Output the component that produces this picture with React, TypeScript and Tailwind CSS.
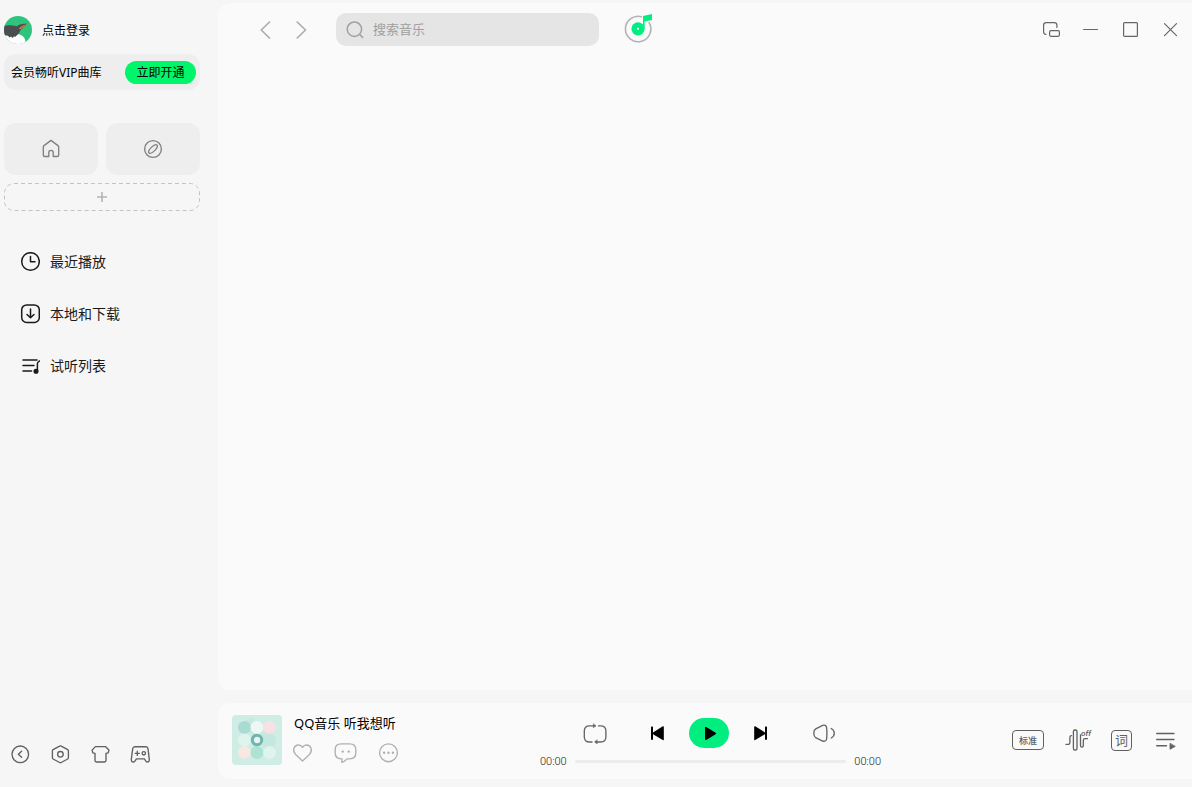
import type { ReactNode } from "react";

function Icon({ w, h, className = "", children }: { w: number; h: number; className?: string; children: ReactNode }) {
  return (
    <svg
      width={w}
      height={h}
      viewBox={`0 0 ${w} ${h}`}
      fill="none"
      stroke="currentColor"
      strokeWidth="1.35"
      strokeLinecap="round"
      strokeLinejoin="round"
      aria-hidden="true"
      className={`block shrink-0 ${className}`}
    >
      {children}
    </svg>
  );
}

function IconButton({ label, className = "", children }: { label: string; className?: string; children: ReactNode }) {
  return (
    <button type="button" aria-label={label} className={`flex shrink-0 items-center justify-center ${className}`}>
      {children}
    </button>
  );
}

function Avatar() {
  return (
    <svg width="28" height="28" viewBox="0 0 28 28" aria-hidden="true" className="block shrink-0 rounded-full">
      <rect width="28" height="28" fill="#2fc47e" />
      <path d="M0 18H13C15 18 18.5 19.5 20 21.5C21 23 21.6 24.5 21.8 28H0Z" fill="#fff" />
      <path d="M0 10.2C3 8.9 8 9 13 10.2C15 8.4 18 7.8 23.2 7.8C20.5 9.6 19.5 12.6 16.6 13.8C16 16 14.8 18 13 19.2L11 21L10 20.2L8.5 22L7 20.6L5.5 21.5L4 19.8L0 19.3Z" fill="#4b4d50" />
      <path d="M14.8 13.2C16.2 10.6 19 8.9 23 8.2C20.8 10 20 11.8 17.6 12.4Z" fill="#f4921e" />
      <path d="M17 11.8L21.5 9.3" stroke="#4b4d50" strokeWidth=".6" />
    </svg>
  );
}

function Cover() {
  return (
    <svg width="50" height="50" viewBox="0 0 50 50" aria-hidden="true" className="block shrink-0 rounded">
      <rect width="50" height="50" fill="#cfece5" />
      <path d="M7 8L20 3L44 26L40 44L25 25Z" fill="#c3e8df" opacity=".7" />
      <circle cx="12.5" cy="12.5" r="6.5" fill="#a8dcd2" />
      <circle cx="25" cy="12.5" r="6.5" fill="#eef7f5" />
      <circle cx="37.5" cy="12.5" r="6.5" fill="#f7e1e5" />
      <circle cx="12.5" cy="25" r="6.5" fill="#def4ed" />
      <circle cx="37.5" cy="25" r="6.5" fill="#c4e8de" />
      <circle cx="12.5" cy="37.5" r="6.5" fill="#f7e8e4" />
      <circle cx="25" cy="37.5" r="6.5" fill="#ade3d3" />
      <circle cx="37.5" cy="37.5" r="6.5" fill="#def4ec" />
      <circle cx="25" cy="25" r="6.2" fill="#70b5ae" />
      <circle cx="25" cy="25" r="3.2" fill="#e8f4f3" />
    </svg>
  );
}

function Sidebar() {
  const links = [
    {
      label: "最近播放",
      icon: (
        <>
          <circle cx="10.5" cy="9.5" r="8.8" />
          <path d="M10.5 4.5V9.8H15" />
        </>
      ),
    },
    {
      label: "本地和下载",
      icon: (
        <>
          <rect x="1.7" y=".9" width="17.6" height="17.6" rx="5" />
          <path d="M10.5 5V13.6M7 10.5L10.5 13.8L14 10.5" />
        </>
      ),
    },
    {
      label: "试听列表",
      icon: (
        <>
          <path d="M3 4H17M3 9.5H14M3 15H11.5" />
          <path d="M17.4 15V7.5C17.6 6 18.5 5.6 19.6 5" />
          <circle cx="16" cy="15.3" r="1.8" fill="currentColor" />
        </>
      ),
    },
  ];

  return (
    <aside className="flex w-[218px] shrink-0 flex-col">
      <div className="flex flex-1 flex-col pt-4 pr-[18px] pl-1">
        <a href="#login" className="flex items-center gap-2.5 text-xs text-black">
          <Avatar />
          <span className="pt-px">点击登录</span>
        </a>

        <div className="mt-2.5 flex h-9 items-center justify-between rounded-xl bg-[#eeeeee] pr-1 pl-[7px] text-xs text-black">
          <span className="pt-px">会员畅听VIP曲库</span>
          <button type="button" className="h-[23px] w-[71px] rounded-full bg-[#00f56a] pt-px">
            立即开通
          </button>
        </div>

        <div className="mt-[33px] grid grid-cols-2 gap-2 text-[#808080]">
          <IconButton label="首页" className="h-[52px] rounded-xl bg-[#eeeeee]">
            <Icon w={20} h={20}>
              <path d="M10 1.4L17 6.6Q17.7 7.2 17.7 8V16Q17.7 17.5 16.2 17.5H12.2V13.5C12.2 10.6 7.8 10.6 7.8 13.5V17.5H3.8Q2.3 17.5 2.3 16V8Q2.3 7.2 3 6.6Z" />
            </Icon>
          </IconButton>
          <IconButton label="发现" className="h-[52px] rounded-xl bg-[#eeeeee]">
            <Icon w={20} h={20}>
              <circle cx="10" cy="10" r="8.4" />
              <ellipse cx="10" cy="10" rx="5.6" ry="2.3" transform="rotate(-45 10 10)" />
            </Icon>
          </IconButton>
        </div>
        <button type="button" aria-label="添加" className="mt-2 block h-7 text-[#b5b5b5]">
          <svg width="100%" height="28" fill="none" stroke="currentColor" aria-hidden="true" className="block overflow-visible">
            <rect x=".5" y=".5" width="195" height="27" rx="9.5" stroke="#c4c4c4" strokeDasharray="4 3" />
            <path d="M93 14H103M98 9V19" strokeWidth="1.6" />
          </svg>
        </button>

        <nav className="mt-[25px] flex flex-col text-sm text-[#1a1a1a]">
          {links.map((l) => (
            <a key={l.label} href="#list" className="flex h-[52px] items-center gap-2.5 pl-4">
              <Icon w={20} h={20} className="stroke-[1.5]">
                {l.icon}
              </Icon>
              {l.label}
            </a>
          ))}
        </nav>
      </div>

      <div className="flex pb-[13px] text-[#606060]">
        <IconButton label="收起" className="size-10">
          <Icon w={20} h={20}>
            <circle cx="10.3" cy="10.3" r="8.3" />
            <path d="M11.6 7.3L8.3 10.3L11.6 13.3" />
          </Icon>
        </IconButton>
        <IconButton label="设置" className="size-10">
          <Icon w={20} h={20}>
            <path d="M9.6 2.1Q10.4 1.7 11.2 2.1L17.7 5.6Q18.4 6 18.4 6.8V13.8Q18.4 14.6 17.7 15L11.2 18.5Q10.4 18.9 9.6 18.5L3.1 15Q2.4 14.6 2.4 13.8V6.8Q2.4 6 3.1 5.6Z" />
            <circle cx="10.4" cy="10.3" r="2.8" />
          </Icon>
        </IconButton>
        <IconButton label="换肤" className="size-10">
          <Icon w={20} h={20}>
            <path d="M5.4 2.6H15.4L18.9 6.1L18.2 8.9L16 9.4V16.6Q16 18 14.6 18H6.4Q5 18 5 16.6V9.4L2.8 8.9L2.1 6.1Z" />
          </Icon>
        </IconButton>
        <IconButton label="游戏" className="size-10">
          <Icon w={20} h={20}>
            <path d="M4.9 2.7H15.9Q17.7 2.7 18 4.7L19.3 15.3Q19.4 18 17.4 18Q16.2 18 15.4 16.5L14.4 14.8H6.4L5.4 16.5Q4.6 18 3.4 18Q1.2 18 1.3 15.3L2.7 4.7Q3.1 2.7 4.9 2.7Z" />
            <path d="M5.2 9.3H9.4M7.3 7.2V11.4" />
            <circle cx="13.8" cy="9.3" r="1.7" />
          </Icon>
        </IconButton>
      </div>
    </aside>
  );
}

function TopBar() {
  return (
    <header className="flex h-[53px] items-center pr-px pl-[30px]">
      <div className="flex text-[#adadad]">
        <IconButton label="后退" className="size-9">
          <Icon w={20} h={20} className="stroke-[1.7]">
            <path d="M13.5 2L5.2 10L13.5 18" />
          </Icon>
        </IconButton>
        <IconButton label="前进" className="size-9">
          <Icon w={20} h={20} className="stroke-[1.7]">
            <path d="M5.2 2L13.5 10L5.2 18" />
          </Icon>
        </IconButton>
      </div>
      <label className="ml-4 flex h-[33px] w-[263px] items-center gap-2 rounded-[10px] bg-[#e5e5e5] pr-3 pl-[9px] text-[#a0a0a0]">
        <Icon w={20} h={20} className="stroke-[1.5]">
          <circle cx="9.4" cy="9.2" r="7.2" />
          <path d="M14.7 14.5L17.6 17.4" />
        </Icon>
        <input
          type="search"
          aria-label="搜索音乐"
          placeholder="搜索音乐"
          className="min-w-0 flex-1 bg-transparent text-[13px] text-[#333333] outline-none placeholder:text-[#a0a0a0]"
        />
      </label>
      <IconButton label="听歌识曲" className="ml-[25px]">
        <svg width="30" height="30" viewBox="0 0 30 30" fill="none" aria-hidden="true" className="block overflow-visible">
          <path d="M18 1.9A12.7 12.7 0 1 0 24.8 7.1" stroke="#b3b3b3" strokeWidth="1.6" />
          <circle cx="14" cy="13.8" r="6.6" fill="#00ee80" />
          <path d="M19 .9L28 -1V5L20.6 6.6V13.8H19Z" fill="#00ee80" />
          <rect x="13" y="12.8" width="2" height="2" rx=".5" fill="#fff" />
        </svg>
      </IconButton>
      <div className="ml-auto flex text-[#666666]">
        <IconButton label="迷你模式" className="size-10">
          <Icon w={20} h={20} className="stroke-[1.2]">
            <path d="M5 14.3Q2.6 14.3 2.6 11.8V5.3Q2.6 2.7 5.2 2.7H13.3Q15.9 2.7 15.9 5.3V7.4" />
            <rect x="8.6" y="10.7" width="9.8" height="5.6" rx="1.2" />
          </Icon>
        </IconButton>
        <IconButton label="最小化" className="size-10">
          <Icon w={20} h={20} className="stroke-[1.1]">
            <path d="M2.6 9.5H16.6" />
          </Icon>
        </IconButton>
        <IconButton label="最大化" className="size-10">
          <Icon w={20} h={20} className="stroke-[1.2]">
            <rect x="2.6" y="2.6" width="13.8" height="13.8" rx="1" />
          </Icon>
        </IconButton>
        <IconButton label="关闭" className="size-10">
          <Icon w={20} h={20} className="stroke-[1.2]">
            <path d="M3.5 3.6L15.5 15.6M15.5 3.6L3.5 15.6" />
          </Icon>
        </IconButton>
      </div>
    </header>
  );
}

function Player() {
  return (
    <footer className="grid h-[76px] grid-cols-[1fr_auto_1fr] rounded-l-xl bg-[#fafafa] pr-[3px] pl-3.5">
      <div className="flex items-center gap-3 pb-0.5">
        <Cover />
        <div className="pb-0.5">
          <div className="text-[13px] leading-5 text-black">QQ音乐 听我想听</div>
          <div className="mt-2 -ml-0.5 flex gap-5 text-[#b0b0b0]">
            <IconButton label="喜欢" className="h-6">
              <Icon w={22} h={22}>
                <path d="M10.5 19L3.6 12.4C-.3 8.2 2.3 3 6.4 3C8.3 3 9.8 4.2 10.5 5.5C11.2 4.2 12.7 3 14.6 3C18.7 3 21.3 8.2 17.4 12.4Z" />
              </Icon>
            </IconButton>
            <IconButton label="评论" className="h-6">
              <Icon w={24} h={24}>
                <path d="M7.3 2.9H15.7Q21.8 2.9 21.8 8.7V12Q21.8 17.8 15.7 17.8H13Q11 20.5 7.8 21.3L8 17.8H7.3Q1.2 17.8 1.2 12V8.7Q1.2 2.9 7.3 2.9Z" />
                <circle cx="8.7" cy="10.6" r="1.2" fill="currentColor" stroke="none" />
                <circle cx="14.7" cy="10.6" r="1.2" fill="currentColor" stroke="none" />
              </Icon>
            </IconButton>
            <IconButton label="更多" className="h-6">
              <Icon w={22} h={22}>
                <circle cx="10.5" cy="10.8" r="8.9" />
                <g fill="currentColor" stroke="none">
                  <circle cx="6.1" cy="10.8" r="1.2" />
                  <circle cx="10.5" cy="10.8" r="1.2" />
                  <circle cx="14.9" cy="10.8" r="1.2" />
                </g>
              </Icon>
            </IconButton>
          </div>
        </div>
      </div>

      <div className="flex w-[341px] flex-col pt-[15px]">
        <div className="flex items-center justify-center pr-0.5 text-black">
          <IconButton label="循环播放" className="mr-[42px] text-[#666666]">
            <Icon w={24} h={24}>
              <path d="M9 21H6.6Q1.3 21 1.3 15.7V10.2Q1.3 4.9 6.6 4.9H12.2M15.5 4.9H17.6Q22.9 4.9 22.9 10.2V15.7Q22.9 21 17.6 21H12.5" />
              <path d="M10.3 3V6.8L12.7 4.9ZM14.2 19.1V22.9L11.8 21Z" fill="currentColor" strokeWidth=".5" />
            </Icon>
          </IconButton>
          <IconButton label="上一首" className="mr-6">
            <svg width="16" height="16" viewBox="0 0 16 16" fill="currentColor" aria-hidden="true" className="block">
              <rect x="2" y="1.6" width="2" height="13.2" rx=".6" />
              <path d="M14.8 2V14.4Q14.8 15.6 13.8 15.1L4.4 9.4Q3.2 8.3 4.4 7.2L13.8 1.3Q14.8 .8 14.8 2Z" />
            </svg>
          </IconButton>
          <IconButton label="播放" className="h-[30px] w-10 rounded-full bg-[#00ee80]">
            <Icon w={16} h={16}>
              <path d="M4.8 2.7V14.3L14.2 8.5Z" fill="currentColor" strokeWidth="1.6" />
            </Icon>
          </IconButton>
          <IconButton label="下一首" className="ml-6">
            <svg width="16" height="16" viewBox="0 0 16 16" fill="currentColor" aria-hidden="true" className="block">
              <rect x="12" y="1.6" width="2" height="13.2" rx=".6" />
              <path d="M1.2 2V14.4Q1.2 15.6 2.2 15.1L11.6 9.4Q12.8 8.3 11.6 7.2L2.2 1.3Q1.2 .8 1.2 2Z" />
            </svg>
          </IconButton>
          <IconButton label="音量" className="ml-[43px] text-[#666666]">
            <Icon w={24} h={24}>
              <path d="M3.7 7.9L10.7 4.3Q12.8 3.6 14.2 5.3Q14.9 7 14.9 12.2Q14.9 17.5 14.2 19.1Q12.8 20.8 10.7 20.1L3.7 16.6Q1.8 15.6 1.8 12.2Q1.8 8.9 3.7 7.9Z" />
              <path d="M19.2 7.5Q22.3 9.2 22.3 12.2Q22.3 15.3 19.2 17" />
            </Icon>
          </IconButton>
        </div>
        <div className="mt-[5px] flex items-center gap-2 font-[Roboto] text-[11px] leading-4 font-light text-[#222222]">
          <span className="pt-px">00:00</span>
          <input
            type="range"
            min={0}
            max={100}
            defaultValue={0}
            aria-label="播放进度"
            className="h-[3px] min-w-0 flex-1 appearance-none rounded-full bg-[#ececec] [&::-webkit-slider-thumb]:size-0 [&::-webkit-slider-thumb]:appearance-none"
          />
          <span className="pt-px">00:00</span>
        </div>
      </div>

      <div className="flex items-center justify-end gap-[21px] pr-3 pb-0.5 text-[#606060]">
        <button type="button" className="flex h-5 w-8 items-center justify-center rounded border border-current text-[9px] leading-none font-medium">
          标准
        </button>
        <IconButton label="音效关闭">
          <svg width="25" height="24" viewBox="0 0 25 24" fill="none" stroke="currentColor" strokeWidth="1.3" strokeLinecap="round" strokeLinejoin="round" aria-hidden="true" className="block overflow-visible">
            <path d="M1 16.4H3.2Q4.9 16.4 4.9 14.7V9.3Q4.9 7.6 6.5 7.6" />
            <rect x="8.4" y="2" width="3.6" height="20" rx="1.6" />
            <path d="M15.5 6.8V17.8Q15.5 19.2 16.9 19.2Q18.3 19.2 18.3 17.8V12.4Q18.3 10.7 20 10.7H22.5" />
            <text x="16" y="8.3" fill="currentColor" stroke="none" fontSize="8" fontStyle="italic" fontFamily="Roboto, sans-serif" fontWeight="500">
              off
            </text>
          </svg>
        </IconButton>
        <button type="button" className="flex size-[21px] items-center justify-center rounded border border-current text-[13px] leading-none">
          词
        </button>
        <IconButton label="播放列表">
          <Icon w={24} h={24}>
            <path d="M3.7 5.5H21M3.7 11.5H21M3.7 17.7H13.5" />
            <path d="M17 15.7V21.3L22 18.5Z" fill="currentColor" strokeWidth=".8" />
          </Icon>
        </IconButton>
      </div>
    </footer>
  );
}

export default function App() {
  return (
    <div className="flex min-h-screen bg-[#f6f6f6] font-['Noto_Sans','Noto_Sans_CJK_SC',sans-serif]">
      <Sidebar />
      <div className="flex min-w-0 flex-1 flex-col gap-[13px] pt-[3px] pb-2">
        <main className="flex-1 rounded-l-xl bg-[#fafafa]">
          <TopBar />
        </main>
        <Player />
      </div>
    </div>
  );
}
